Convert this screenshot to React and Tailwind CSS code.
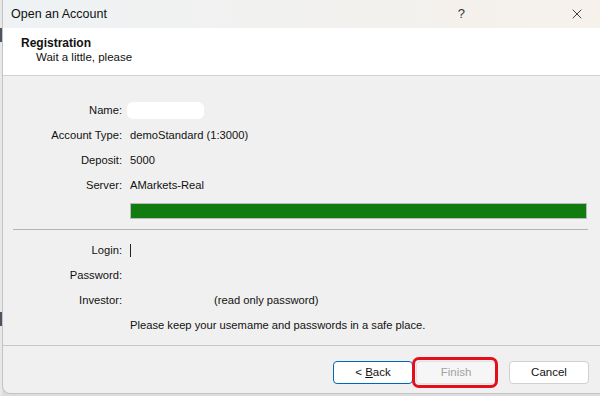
import React from 'react';
import { X } from 'lucide-react';

const font = { fontFamily: '"Liberation Sans", Arial, sans-serif' };

const Row = ({ label, children }) => (
  <div className="flex h-[25px] items-center">
    <div className="w-[119px] shrink-0 text-right">{label}</div>
    <div className="ml-[8px] flex items-center">{children}</div>
  </div>
);

export default function App() {
  return (
    <div className="flex h-[396px] w-[600px] overflow-hidden bg-[#dcdcdc] text-[11.2px] text-[#111]" style={font}>
      {/* sliver of the desktop behind */}
      <div className="flex w-[2px] shrink-0 flex-col bg-[#e8e8e8]">
        <div className="mt-[28px] h-[14px] bg-[#4a5560]" />
        <div className="mt-[270px] h-[14px] bg-[#4a5560]" />
      </div>

      <div className="flex h-[394px] flex-1 flex-col overflow-hidden rounded-bl-[8px] border-b border-l border-[#c4c4c4] bg-[#f0f0f0]">
        {/* Title bar */}
        <div className="flex h-[28px] shrink-0 items-center bg-gradient-to-r from-[#eef2f4] to-[#f6f1eb] pl-[8px]">
          <span className="text-[12.5px]">Open an Account</span>
          <span className="ml-auto mr-[104px] text-[13px] text-[#333]">?</span>
          <X className="mr-[15px] h-[16px] w-[16px] text-[#222]" strokeWidth={1.3} />
        </div>

        {/* Header */}
        <div className="flex h-[48px] shrink-0 flex-col border-b border-[#d2d2d2] bg-white pl-[18px] pt-[8px]">
          <div className="text-[12px] font-bold leading-[14px]">Registration</div>
          <div className="ml-[15px] text-[11.5px] leading-[14px]">Wait a little, please</div>
        </div>

        {/* Body */}
        <div className="flex flex-1 flex-col pt-[22px]">
          <Row label="Name:">
            <div className="-ml-[3px] h-[17px] w-[77px] rounded-md bg-white blur-[0.5px]" />
          </Row>
          <Row label="Account Type:">demoStandard (1:3000)</Row>
          <Row label="Deposit:">5000</Row>
          <Row label="Server:">AMarkets-Real</Row>

          <div className="ml-[127px] mr-[13px] mt-[5px] h-[16px] border border-[#b9b9b9] bg-[#107c10]" />

          <div className="ml-[10px] mr-[12px] mt-[10px] h-px bg-[#b4b4b4]" />

          <div className="mt-[8px]">
            <Row label="Login:">
              <div className="h-[13px] w-px bg-[#222]" />
            </Row>
            <Row label="Password:" />
            <Row label="Investor:">
              <span className="ml-[84px]">(read only password)</span>
            </Row>
            <Row label="">Please keep your usemame and passwords in a safe place.</Row>
          </div>
        </div>

        {/* Footer */}
        <div className="flex h-[48px] shrink-0 items-start justify-end border-t border-[#c8c8c8] pr-[11px] pt-[15px]">
          <button className="h-[23px] w-[80px] rounded-[4px] border border-[#0067c0] bg-white text-[11.5px]">
            &lt; <span className="underline">B</span>ack
          </button>
          <div className="relative ml-[3px]">
            <button className="h-[23px] w-[80px] rounded-[4px] border border-[#e2e2e2] bg-[#f6f6f6] text-[11.5px] text-[#a2a2a2]">
              Finish
            </button>
            <div className="pointer-events-none absolute -bottom-[4px] -left-[4px] -right-[2px] -top-[4px] rounded-[7px] border-[3px] border-[#e3101c]" />
          </div>
          <button className="ml-[13px] h-[23px] w-[80px] rounded-[4px] border border-[#d0d0d0] bg-white text-[11.5px]">
            Cancel
          </button>
        </div>
      </div>
    </div>
  );
}
